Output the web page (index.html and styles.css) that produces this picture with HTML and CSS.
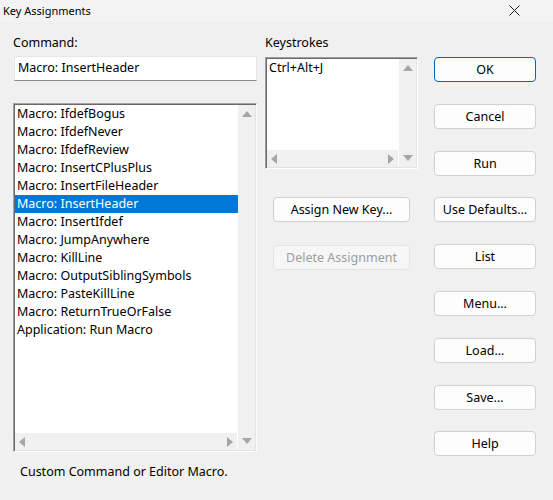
FILE: index.html
```html
<!DOCTYPE html>
<html>
<head>
<meta charset="utf-8">
<link rel="stylesheet" href="styles.css">
</head>
<body>
<div class="window">
  <div class="titlebar">
    <span class="title">Key Assignments</span>
    <svg class="close" width="11" height="11" viewBox="0 0 11 11"><path d="M0.5 0.5 L10.5 10.5 M10.5 0.5 L0.5 10.5" stroke="#1a1a1a" stroke-width="1" fill="none"/></svg>
  </div>
  <div class="content">
    <div class="col col-left">
      <div class="label">Command:</div>
      <div class="input">Macro: InsertHeader</div>
      <div class="listbox cmd-list">
        <div class="lb-main">
          <ul class="items">
            <li>Macro: IfdefBogus</li>
            <li>Macro: IfdefNever</li>
            <li>Macro: IfdefReview</li>
            <li>Macro: InsertCPlusPlus</li>
            <li>Macro: InsertFileHeader</li>
            <li class="selected">Macro: InsertHeader</li>
            <li>Macro: InsertIfdef</li>
            <li>Macro: JumpAnywhere</li>
            <li>Macro: KillLine</li>
            <li>Macro: OutputSiblingSymbols</li>
            <li>Macro: PasteKillLine</li>
            <li>Macro: ReturnTrueOrFalse</li>
            <li>Application: Run Macro</li>
          </ul>
          <div class="hscroll">
            <svg width="6" height="10" viewBox="0 0 6 10"><polygon points="6,0 6,10 0,5" fill="#a6a6a6"/></svg>
            <svg width="6" height="10" viewBox="0 0 6 10"><polygon points="0,0 0,10 6,5" fill="#a6a6a6"/></svg>
          </div>
        </div>
        <div class="vscroll">
          <svg width="10" height="6" viewBox="0 0 10 6"><polygon points="0,6 10,6 5,0" fill="#a6a6a6"/></svg>
          <svg width="10" height="6" viewBox="0 0 10 6"><polygon points="0,0 10,0 5,6" fill="#a6a6a6"/></svg>
        </div>
      </div>
      <div class="status">Custom Command or Editor Macro.</div>
    </div>
    <div class="col col-mid">
      <div class="label">Keystrokes</div>
      <div class="listbox keys-list">
        <div class="lb-main">
          <ul class="items">
            <li>Ctrl+Alt+J</li>
          </ul>
          <div class="hscroll">
            <svg width="6" height="10" viewBox="0 0 6 10"><polygon points="6,0 6,10 0,5" fill="#a6a6a6"/></svg>
            <svg width="6" height="10" viewBox="0 0 6 10"><polygon points="0,0 0,10 6,5" fill="#a6a6a6"/></svg>
          </div>
        </div>
        <div class="vscroll">
          <svg width="10" height="6" viewBox="0 0 10 6"><polygon points="0,6 10,6 5,0" fill="#a6a6a6"/></svg>
          <svg width="10" height="6" viewBox="0 0 10 6"><polygon points="0,0 10,0 5,6" fill="#a6a6a6"/></svg>
        </div>
      </div>
      <button class="btn assign">Assign New Key...</button>
      <button class="btn delete" disabled>Delete Assignment</button>
    </div>
    <div class="col col-right">
      <button class="btn default">OK</button>
      <button class="btn">Cancel</button>
      <button class="btn">Run</button>
      <button class="btn">Use Defaults...</button>
      <button class="btn">List</button>
      <button class="btn">Menu...</button>
      <button class="btn">Load...</button>
      <button class="btn">Save...</button>
      <button class="btn">Help</button>
    </div>
  </div>
</div>
</body>
</html>
```

FILE: styles.css
```css
* { box-sizing: border-box; }
html, body {
  margin: 0;
  padding: 0;
  background: #f0f0f0;
  font-family: "Noto Sans", "Open Sans", sans-serif;
  font-size: 12.5px;
  color: #000;
}
.window {
  width: 553px;
  height: 500px;
  background: #f0f0f0;
}
.titlebar {
  height: 22px;
  background: #f3f3f3;
  display: flex;
  align-items: center;
  justify-content: space-between;
  padding: 0 33px 0 3px;
}
.title { line-height: 22px; font-size: 11px; }
.close { display: block; margin-top: -2px; }

.content {
  display: flex;
  padding-left: 13px;
}
.col { display: flex; flex-direction: column; }
.col-left { width: 244px; padding-top: 13px; }
.col-mid { width: 153px; margin-left: 8px; padding-top: 13px; }
.col-right { width: 102px; margin-left: 16px; padding-top: 35px; gap: 21.8px; }

.label { height: 15px; line-height: 15px; }

.input {
  margin-top: 6px;
  margin-left: 1px;
  height: 25px;
  background: #fff;
  border: 1px solid #e6e6e6;
  border-bottom: 1px solid #8a8a8a;
  padding-left: 3px;
  line-height: 22px;
}

.listbox {
  display: flex;
  background: #fff;
  border-top: 1px solid #a0a0a0;
  border-left: 1px solid #a0a0a0;
  border-right: 1px solid #fdfdfd;
  border-bottom: 1px solid #fdfdfd;
  box-shadow: inset 1px 1px 0 #696969, inset -1px -1px 0 #e3e3e3;
  padding: 1px;
}
.cmd-list { margin-top: 22px; height: 349px; }
.keys-list { margin-top: 7px; height: 112px; }

.lb-main {
  flex: 1;
  display: flex;
  flex-direction: column;
  min-width: 0;
}
.items {
  list-style: none;
  margin: 0;
  padding: 0;
  flex: 1;
}
.items li {
  height: 18px;
  line-height: 18px;
  padding-left: 2px;
  white-space: nowrap;
}
.items li.selected {
  background: #0078d7;
  color: #fff;
}
.hscroll {
  height: 17px;
  background: #f0f0f0;
  display: flex;
  align-items: center;
  justify-content: space-between;
  padding: 0 4px;
  margin-right: 1px;
}
.vscroll {
  width: 17px;
  background: #f0f0f0;
  display: flex;
  flex-direction: column;
  align-items: center;
  justify-content: space-between;
  padding: 6px 0 6px;
}
.hscroll svg, .vscroll svg { display: block; }

.status {
  margin-top: 12px;
  margin-left: 7px;
  line-height: 16px;
}

.btn {
  height: 25px;
  width: 102px;
  padding: 0;
  font-family: inherit;
  font-size: 12.5px;
  color: #000;
  background: #fdfdfd;
  border: 1px solid #d0d0d0;
  border-radius: 4px;
}
.btn.default {
  border: 1px solid #0067c0;
}
.assign {
  width: 137px;
  margin-left: 8px;
  margin-top: 28px;
}
.delete {
  width: 137px;
  margin-left: 8px;
  margin-top: 23px;
  color: #9d9d9d;
  background: #f6f6f6;
  border-color: #e5e5e5;
}
```
